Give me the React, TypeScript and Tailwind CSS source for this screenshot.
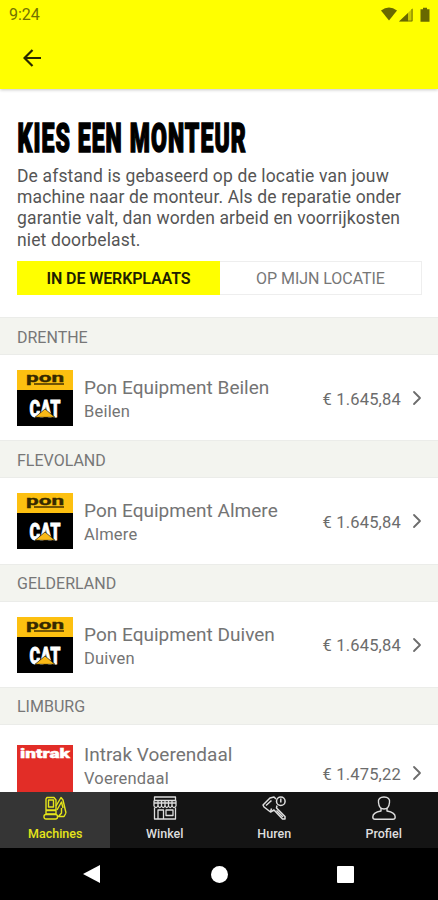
import { ChevronRight } from "lucide-react"
import type { ReactNode } from "react"

type Dealer = {
    province: string
    name: string
    city: string
    price: string
    brand: "pon" | "intrak"
}

const dealers: Dealer[] = [
    { province: "DRENTHE", name: "Pon Equipment Beilen", city: "Beilen", price: "€ 1.645,84", brand: "pon" },
    { province: "FLEVOLAND", name: "Pon Equipment Almere", city: "Almere", price: "€ 1.645,84", brand: "pon" },
    { province: "GELDERLAND", name: "Pon Equipment Duiven", city: "Duiven", price: "€ 1.645,84", brand: "pon" },
    { province: "LIMBURG", name: "Intrak Voerendaal", city: "Voerendaal", price: "€ 1.475,22", brand: "intrak" }
]

function StatusBar() {
    return (
        <div className="flex h-[30px] items-center justify-between pl-[9px] pr-2 text-[#727200]">
            <span className="text-[16px] leading-none">9:24</span>
            <svg width="50" height="16" viewBox="0 0 50 16" fill="#686800">
                <path d="M1 3.5 Q9 -2.5 17 3.5 L9 13.5 Z" />
                <path d="M19 14.5 L33 1 V14.5 Z" fillOpacity=".35" />
                <path d="M19 14.5 L28 6 V14.5 Z" />
                <path d="M32 2 V14 H28" fill="none" stroke="#686800" strokeWidth=".8" />
                <path d="M40.5 2.2 H43 V.8 H47 V2.2 H49.5 V14.8 H40.5 Z" />
            </svg>
        </div>
    )
}

function PonLogo() {
    return (
        <svg width="56" height="56" viewBox="0 0 56 56" className="shrink-0 overflow-visible">
            <rect width="56" height="56" fill="#000" />
            <rect width="56" height="20" fill="#fdc010" />
            <text x="9" y="11.8" fontFamily="Roboto, sans-serif" fontSize="12" fontWeight="700" textLength="38" lengthAdjust="spacingAndGlyphs" fill="#352800" stroke="#352800" strokeWidth=".3">pon</text>
            <path d="M17 14 H47" stroke="#352800" strokeWidth="1.4" />
            <text x="12.5" y="46.5" fontFamily="Roboto, sans-serif" fontSize="23" fontWeight="900" textLength="31" lengthAdjust="spacingAndGlyphs" fill="#fff" stroke="#fff" strokeWidth=".8">CAT</text>
            <path d="M18 47.3 L28 39 L38 47.3 Z" fill="#f9b916" stroke="#000" strokeWidth=".6" />
        </svg>
    )
}

function IntrakLogo() {
    return (
        <svg width="56" height="56" viewBox="0 0 56 56" className="shrink-0">
            <rect width="56" height="56" fill="#e22d27" />
            <text x="3" y="12.6" fontFamily="Roboto, sans-serif" fontSize="13.5" fontWeight="900" textLength="50" lengthAdjust="spacingAndGlyphs" fill="#fff" stroke="#fff" strokeWidth=".4">intrak</text>
        </svg>
    )
}

function DealerRow({ dealer }: { dealer: Dealer }) {
    const isPon = dealer.brand === "pon"
    return (
        <section>
            <h2 className="flex h-[38px] items-center border-y border-[#ebece9] bg-[#f3f4ef] pl-[17px] pt-[3px] text-[16px] leading-none text-[#777]">
                {dealer.province}
            </h2>
            <div className={`flex h-[85.3px] pl-[17px] pr-[13px] ${isPon ? "pt-[15px]" : "pt-5"}`}>
                {isPon ? <PonLogo /> : <IntrakLogo />}
                <div className={`ml-[11px] flex-1 text-[#747474] ${isPon ? "pt-[6px]" : "-mt-[2px]"}`}>
                    <div className="text-[19px] leading-6 tracking-[0.02px]">{dealer.name}</div>
                    <div className="text-[16.5px] leading-6 tracking-[0.2px]">{dealer.city}</div>
                </div>
                <div className="flex h-[56px] items-center gap-[7px] text-[#6c6c6c]">
                    <span className="pt-[4px] text-[16.5px] tracking-[0.2px]">{dealer.price}</span>
                    <ChevronRight size={24} strokeWidth={1.8} className="-ml-[3px] -mr-[4px]" />
                </div>
            </div>
        </section>
    )
}

function ExcavatorIcon() {
    return (
        <svg width="24" height="24" viewBox="0 0 24 24" fill="none" stroke="currentColor" strokeWidth="1.4" strokeLinejoin="round">
            <path d="M4 1.500 H11 L13 4 V14 H3 V3 Z M5.500 4 H10.500 V11 H5.500 Z M3 14.500 H13 V18 H3 Z" />
            <rect x="1" y="18.500" width="13.500" height="4.500" rx="2" />
            <path d="M13 10 L18 1.500 L20 4 L23 17 M14 14 L18.500 6 L20 12 M18.500 12 V17 L15.500 20.500 H21 L23 17" />
        </svg>
    )
}

function ShopIcon() {
    return (
        <svg width="24" height="24" viewBox="0 0 24 24" fill="none" stroke="currentColor" strokeWidth="1.3" strokeLinejoin="round">
            <path d="M1.5 1 H22.5 V4.500 H1.5 Z M1 4.500 V10 Q3 13 5 10 Q6.800 13 8.500 10 Q10.300 13 12 10 Q13.800 13 15.500 10 Q17.200 13 19 10 Q21 13 23 10 V4.500" />
            <path d="M1 7 H23 M5 4.500 V10 M8.5 4.500 V10 M12 4.500 V10 M15.500 4.500 V10 M19 4.500 V10 M1.500 11.500 V23 H22.500 V11.500" />
            <path d="M5 23 V14 H10.500 V23 M13 14 H20 V19.500 H13 Z" />
        </svg>
    )
}

function KeyIcon() {
    return (
        <svg width="24" height="24" viewBox="0 0 24 24" fill="none" stroke="currentColor" strokeWidth="1.5" strokeLinejoin="round">
            <path d="M14 3 L12 1 L8 2 L1 9 L2 11 L8.500 16 L12 14 L20.500 23 H23 V20.500 L14.500 12 L15 9.500" />
            <path d="M4 9.500 L9.500 4.500 M8.500 16 L9.500 12.500 M14.500 14.500 L21 21" />
            <circle cx="18.800" cy="5.200" r="4.300" />
            <path d="M18.800 2.500 V6.500" />
        </svg>
    )
}

function ProfileIcon() {
    return (
        <svg width="24" height="24" viewBox="0 0 24 24" fill="none" stroke="currentColor" strokeWidth="1.4" strokeLinejoin="round">
            <path d="M12 1 C8 1 5.800 3 6.500 6.500 C6.800 10 8.500 13 12 13 C15.500 13 17.200 10 17.500 6.500 C18.200 3 16 1 12 1 Z" />
            <path d="M9 12 V15 C4.500 15.800 .8 16.800 .8 21 Q.8 23.200 3 23.200 H21 Q23.200 23.200 23.200 21 C23.200 16.800 19.500 15.800 15 15 V12" />
        </svg>
    )
}

function Tab({ label, icon, active }: { label: string; icon: ReactNode; active?: boolean }) {
    return (
        <div className={`flex flex-1 flex-col items-center pl-px pt-[4px] ${active ? "bg-[#353535] text-[#e5e51a]" : "text-[#dedede]"}`}>
            {icon}
            <span className="mt-[6px] text-[12.5px] font-medium leading-[16px]">{label}</span>
        </div>
    )
}

export default function App() {
    return (
        <div className="flex h-[900px] w-[438px] flex-col overflow-hidden bg-white font-[Roboto,sans-serif]">
            <header className="relative z-10 h-[89px] shrink-0 bg-[#ffff00] shadow-[0_1px_3px_rgba(0,0,0,0.22)]">
                <StatusBar />
                <svg width="18" height="18" viewBox="0 0 18 18" fill="none" stroke="#292900" strokeWidth="2.2" className="ml-[23px] mt-[19px]">
                    <path d="M9.500 1 L1.500 9 L9.500 17 M1.500 9 H18" />
                </svg>
            </header>

            <main className="min-h-0 flex-1 overflow-hidden">
                <div className="h-[228px] px-[17px] pt-[28px]">
                    <h1 className="h-[41px] origin-left scale-x-[0.575] whitespace-nowrap pl-px pt-px text-[40px] font-black leading-[41px] tracking-[1.9px] text-black [-webkit-text-stroke:1.6px_#000]">
                        KIES EEN MONTEUR
                    </h1>
                    <p className="mt-[8px] whitespace-nowrap text-[17.5px] leading-[21.2px] tracking-[0.14px] text-[#555]">
                        De afstand is gebaseerd op de locatie van jouw<br />
                        machine naar de monteur. Als de reparatie onder<br />
                        garantie valt, dan worden arbeid en voorrijkosten<br />
                        niet doorbelast.
                    </p>
                    <div className="-mr-px mt-[10px] flex h-[34px] text-[16px] leading-none">
                        <div className="flex w-[203px] items-center justify-center bg-[#ffff00] pt-[2px] font-semibold tracking-[-0.1px] text-[#202000]">
                            IN DE WERKPLAATS
                        </div>
                        <div className="flex flex-1 items-center justify-center border border-l-0 border-[#eeeeee] pt-[2px] tracking-[-0.05px] text-[#777]">
                            OP MIJN LOCATIE
                        </div>
                    </div>
                </div>
                {dealers.map((dealer) => (
                    <DealerRow key={dealer.province} dealer={dealer} />
                ))}
            </main>

            <nav className="flex h-[56px] shrink-0 bg-[#141414]">
                <Tab label="Machines" icon={<ExcavatorIcon />} active />
                <Tab label="Winkel" icon={<ShopIcon />} />
                <Tab label="Huren" icon={<KeyIcon />} />
                <Tab label="Profiel" icon={<ProfileIcon />} />
            </nav>
            <div className="flex h-[52px] shrink-0 items-center justify-between bg-black pl-[83px] pr-[84px]">
                <svg width="18" height="20" viewBox="0 0 18 20" fill="#fff">
                    <path d="M0 10 L17 1 V19 Z" />
                </svg>
                <span className="size-[17px] rounded-full bg-white" />
                <span className="size-[17px] rounded-[1px] bg-white" />
            </div>
        </div>
    )
}
